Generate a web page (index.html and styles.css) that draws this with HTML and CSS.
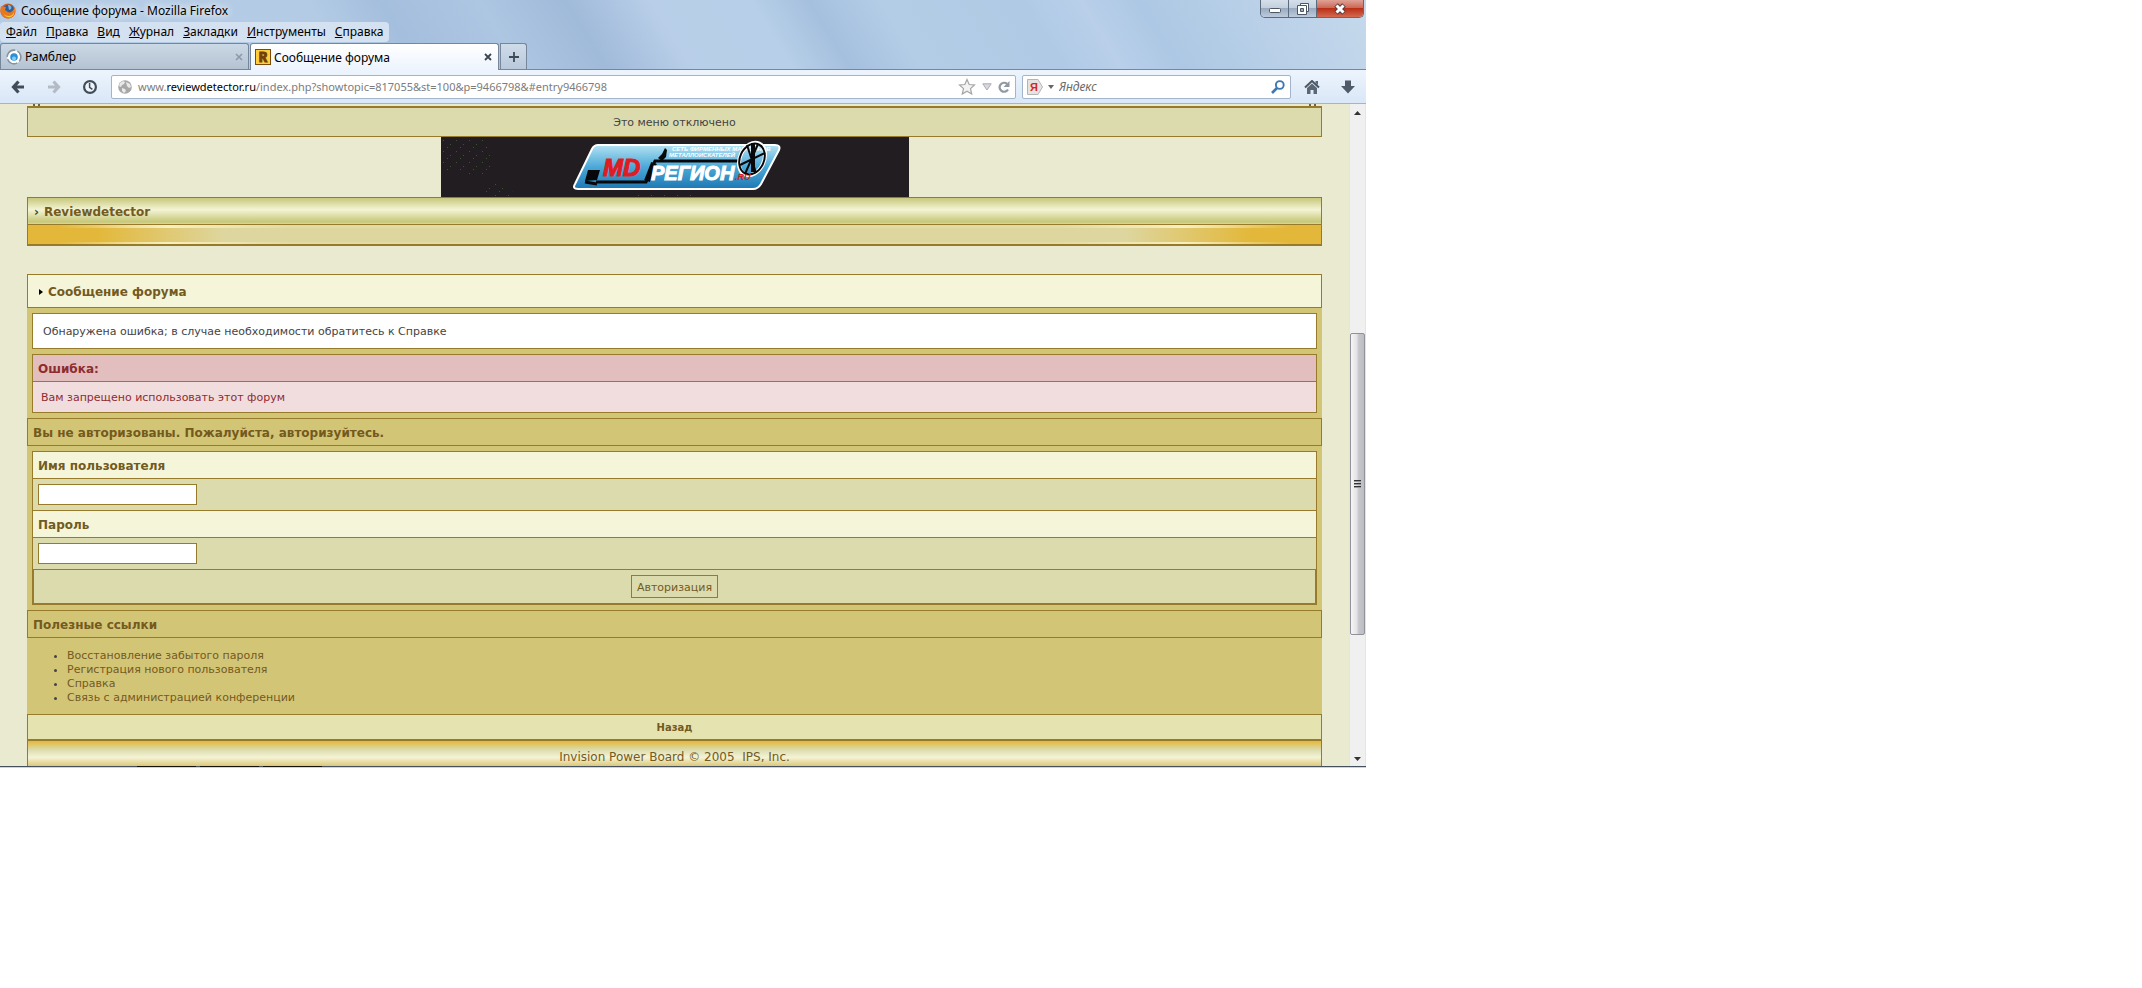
FILE: index.html
```
<!DOCTYPE html>
<html lang="ru">
<head>
    <meta charset="UTF-8">
    <meta name="viewport" content="width=device-width, initial-scale=1.0">
    <title>Сообщение форума</title>
    <link rel="stylesheet" href="styles.css">
</head>
<body>
<div class="window">
    <header class="chrome">
        <div class="titlebar">
            <svg class="logo" viewBox="0 0 16 16">
                <circle cx="8" cy="8" r="7.6" fill="#d9601a"/>
                <circle cx="8.6" cy="6.8" r="5.4" fill="#2c5f9e"/>
                <path d="M8 2c3 0 4 2 3 4L9 7z" fill="#7db4dc"/>
                <path d="M1 3c1 1 3 1 5 1L5 7l3 2c2 1 4 0 6-3l1-2c1 5-1 11-7 11.500C2 15-1 9 1 3z" fill="#e8781f"/>
                <path d="M14 5c1 4-1 8-5 8-3 0-5-1-6-3 2 5 9 6 11 1z" fill="#f8c43c"/>
            </svg>
            <span class="caption">Сообщение форума - Mozilla Firefox</span>
            <div class="winbuttons">
                <button type="button" class="minimize" aria-label="Свернуть">
                    <svg width="14" height="14" viewBox="0 0 14 14"><rect x="1.500" y="6.500" width="11" height="4" rx="1" fill="#fff" stroke="#4d5665"/></svg>
                </button>
                <button type="button" class="maximize" aria-label="Развернуть">
                    <svg width="14" height="14" viewBox="0 0 14 14"><path d="M4.500 1.500h8v8h-8z" fill="#fff" stroke="#4d5665"/><path d="M1.500 3.500h9v9h-9z" fill="#fff" stroke="#4d5665"/><path d="M4.500 6.500h3v3h-3z" fill="#9fb0c4" stroke="#4d5665"/></svg>
                </button>
                <button type="button" class="close" aria-label="Закрыть">
                    <svg width="14" height="14" viewBox="0 0 14 14"><path d="M3 3l8 8m0-8l-8 8" stroke="#5b3a3c" stroke-width="5"/><path d="M3.500 3.500l7 7m0-7l-7 7" stroke="#fff" stroke-width="3"/></svg>
                </button>
            </div>
        </div>
        <nav class="menubar">
            <a href="#"><u>Ф</u>айл</a>
            <a href="#"><u>П</u>равка</a>
            <a href="#"><u>В</u>ид</a>
            <a href="#"><u>Ж</u>урнал</a>
            <a href="#"><u>З</u>акладки</a>
            <a href="#"><u>И</u>нструменты</a>
            <a href="#"><u>С</u>правка</a>
        </nav>
        <div class="tabs">
            <div class="tab">
                <svg class="favicon" viewBox="0 0 16 16">
                    <circle cx="8" cy="8" r="6.800" fill="#fff" stroke="#8b949c" stroke-width="1.600" stroke-dasharray="11.800 2.400" transform="rotate(-60 8 8)"/>
                    <circle cx="8" cy="8" r="3.800" fill="#2c8fd8"/>
                    <circle cx="8" cy="9.500" r="2" fill="#7fd0f7"/>
                </svg>
                <span class="tabname">Рамблер</span>
                <button type="button" class="tabclose" aria-label="Закрыть вкладку"><svg width="8" height="8" viewBox="0 0 8 8"><path d="M1 1l6 6m0-6L1 7" stroke="currentColor" stroke-width="1.600"/></svg></button>
            </div>
            <div class="tab active">
                <svg class="favicon" viewBox="0 0 16 16">
                    <rect x=".5" y=".5" width="15" height="15" fill="#ffcf3d" stroke="#7d4b08"/>
                    <text x="8" y="13" text-anchor="middle" class="rletter">R</text>
                </svg>
                <span class="tabname">Сообщение форума</span>
                <button type="button" class="tabclose" aria-label="Закрыть вкладку"><svg width="8" height="8" viewBox="0 0 8 8"><path d="M1 1l6 6m0-6L1 7" stroke="currentColor" stroke-width="1.800"/></svg></button>
            </div>
            <button type="button" class="newtab" aria-label="Новая вкладка"><svg width="10" height="10" viewBox="0 0 10 10"><path d="M5 0v10M0 5h10" stroke="#3f4a57" stroke-width="1.800"/></svg></button>
        </div>
        <div class="toolbar">
            <div class="navbuttons">
                <button type="button" aria-label="Назад"><svg width="14" height="14" viewBox="0 0 14 14"><path d="M7.500 1.500L2.500 7l5 5.500M3 7h10" fill="none" stroke="#404c58" stroke-width="3.200"/></svg></button>
                <button type="button" aria-label="Вперёд"><svg width="14" height="14" viewBox="0 0 14 14"><path d="M6.500 1.500l5 5.500-5 5.500M11 7H1" fill="none" stroke="#b3bcc6" stroke-width="3.200"/></svg></button>
                <button type="button" aria-label="Журнал"><svg width="14" height="14" viewBox="0 0 14 14"><circle cx="7" cy="7" r="5.900" fill="#eef4fb" stroke="#404c58" stroke-width="2.200"/><path d="M6.600 3v4.400l2.800 2" fill="none" stroke="#404c58" stroke-width="1.500"/></svg></button>
            </div>
            <div class="urlbar">
                <svg class="globe" width="14" height="14" viewBox="0 0 14 14"><circle cx="7" cy="7" r="6.800" fill="#a8a8a8"/><path d="M2 3l3-2 2 1-1 2-2 1-1 2-2-1zM8 2l4 2 1 3-2 1-2-2zM4 8l3 1 1 2-2 2-2-2z" fill="#e9e9e9"/></svg>
                <span class="url">www.<b>reviewdetector.ru</b>/index.php?showtopic=817055&amp;st=100&amp;p=9466798&amp;#entry9466798</span>
                <svg width="18" height="18" viewBox="0 0 18 18"><path d="M9 1.500l2.200 5 5.300.5-4 3.600 1.200 5.400L9 13.200 4.300 16l1.200-5.400-4-3.600 5.300-.5z" fill="#f3f3f3" stroke="#a5a5a5" stroke-width="1.200"/></svg>
                <svg width="10" height="8" viewBox="0 0 10 8"><path d="M.8.800h8.400L5 7z" fill="#d9d9de" stroke="#a9abb5"/></svg>
                <svg width="12" height="12" viewBox="0 0 12 12"><path d="M10 8.500A4.500 4.500 0 1 1 9 2.800" fill="none" stroke="#8f98a3" stroke-width="2.200"/><path d="M11.500 0v6h-6z" fill="#8f98a3"/></svg>
            </div>
            <div class="searchbar">
                <svg width="16" height="16" viewBox="0 0 16 16"><path d="M.5.500H11L15.500 8 11 15.500H.5z" fill="#e4e4e4" stroke="#b5b5b5"/><text x="3" y="12" class="ya">Я</text></svg>
                <svg width="6" height="4" viewBox="0 0 6 4"><path d="M0 0h6L3 4z" fill="#666"/></svg>
                <input type="search" placeholder="Яндекс" aria-label="Поиск">
                <svg width="14" height="14" viewBox="0 0 14 14"><circle cx="8.800" cy="5" r="3.900" fill="none" stroke="#3c78b4" stroke-width="1.900"/><path d="M6 8l-5 5" stroke="#3c78b4" stroke-width="2.600"/></svg>
            </div>
            <div class="toolicons">
                <button type="button" aria-label="Домой"><svg width="16" height="14" viewBox="0 0 16 14"><path d="M1 7.500L8 1l7 6.500" fill="none" stroke="#4a5663" stroke-width="2"/><path d="M11.500 1H14v4l-2.500-2zM3 8l5-4.500L13 8v6H9.500v-4h-3v4H3z" fill="#5b6774"/></svg></button>
                <button type="button" aria-label="Загрузки"><svg width="16" height="14" viewBox="0 0 16 14"><path d="M5 .5h6V6h4l-7 7.500L1 6h4z" fill="#4f5b68"/></svg></button>
            </div>
        </div>
    </header>

    <div class="viewport">
        <main class="page">
            <div class="cutline"><span></span><span></span></div>
            <div class="usermenu">Это меню отключено</div>
            <div class="banner">
                <svg viewBox="0 0 468 60">
                    <defs>
                        <linearGradient id="plate" x1="0" y1="0" x2="0" y2="1"><stop offset="0" stop-color="#b4e2f3"/><stop offset=".5" stop-color="#4ba9d8"/><stop offset="1" stop-color="#1e78b4"/></linearGradient>
                        <pattern id="specks" width="13" height="11" patternUnits="userSpaceOnUse"><path d="M2 3h1v1H2zM9 7h1v1H9zM6 10h1v1h-1z" fill="#3c5233"/></pattern>
                    </defs>
                    <rect width="468" height="60" fill="#221d20"/>
                    <path d="M0 0h42l14 30-20 10-36-8zM40 50l22-6 14 16H44zM190 56h60v4h-60z" fill="url(#specks)"/>
                    <path d="M157 8h177q6 0 4 5l-18 34q-3 5-8 5H137q-6 0-3-5l17-35q2-4 6-4z" fill="url(#plate)" stroke="#fff" stroke-width="2"/>
                    <path d="M147 33h12l-3 10-12 1z" fill="#08080a"/>
                    <path d="M144 45l12 2M155 45h50l9-21h84" fill="none" stroke="#08080a" stroke-width="3"/>
                    <path d="M206 44l7-18" stroke="#08080a" stroke-width="6"/>
                    <path d="M217 21l4-4 3-6 2 2-1 7-4 4z" fill="#08080a"/>
                    <ellipse cx="311" cy="22" rx="12" ry="17" transform="rotate(25 311 22)" fill="none" stroke="#fff" stroke-width="4"/>
                    <text x="231" y="14" class="slogan">СЕТЬ ФИРМЕННЫХ МАГАЗИНОВ</text>
                    <text x="228" y="20" class="slogan">МЕТАЛЛОИСКАТЕЛЕЙ</text>
                    <g fill="none" stroke="#08080a" stroke-width="2"><ellipse cx="311" cy="22" rx="12" ry="16" transform="rotate(25 311 22)"/><path d="M306 8l9 28M299 28l25-12M317 7l-13 30"/><path d="M312 6v29" stroke-width="4"/></g>
                    <text x="162" y="39" class="md">MD</text>
                    <text x="210" y="43" class="region">РЕГИОН</text>
                    <text x="294" y="43" class="ru">.RU</text>
                </svg>
            </div>
            <div class="navstrip">
                <div class="crumbs"><span class="chevron">›</span><a href="#">Reviewdetector</a></div>
                <div class="goldbar"></div>
            </div>

            <section class="board">
                <h1 class="maintitle"><svg width="4" height="6" viewBox="0 0 4 6"><path d="M0 0l4 3-4 3z" fill="#000"/></svg>Сообщение форума</h1>
                <div class="inner">
                    <p class="notice">Обнаружена ошибка; в случае необходимости обратитесь к Справке</p>
                    <div class="errorbox">
                        <h2>Ошибка:</h2>
                        <p>Вам запрещено использовать этот форум</p>
                    </div>
                </div>
                <h2 class="bar">Вы не авторизованы. Пожалуйста, авторизуйтесь.</h2>
                <div class="inner">
                    <form class="login">
                        <label for="username">Имя пользователя</label>
                        <div class="field"><input type="text" id="username"></div>
                        <label for="password">Пароль</label>
                        <div class="field"><input type="password" id="password"></div>
                        <div class="submit"><button type="button">Авторизация</button></div>
                    </form>
                </div>
                <h2 class="bar">Полезные ссылки</h2>
                <ul class="links">
                    <li><a href="#">Восстановление забытого пароля</a></li>
                    <li><a href="#">Регистрация нового пользователя</a></li>
                    <li><a href="#">Справка</a></li>
                    <li><a href="#">Связь с администрацией конференции</a></li>
                </ul>
                <div class="back"><a href="#">Назад</a></div>
                <footer class="copyright">Invision Power Board © 2005 &nbsp;IPS, Inc.</footer>
            </section>
        </main>
        <div class="scrollbar">
            <svg class="arrow" width="7" height="4" viewBox="0 0 7 4"><path d="M0 4l3.500-4L7 4z" fill="#333"/></svg>
            <div class="track"><div class="thumb"><span></span><span></span><span></span></div></div>
            <svg class="arrow" width="7" height="4" viewBox="0 0 7 4"><path d="M0 0l3.500 4L7 0z" fill="#333"/></svg>
        </div>
    </div>
    <div class="windowedge"><span></span><span></span><span></span></div>
</div>
</body>
</html>
```
FILE: styles.css
```
* {
    box-sizing: border-box;
}
body {
    margin: 0;
    background: #fff;
    font-family: "DejaVu Sans", Verdana, sans-serif;
    font-size: 11px;
    color: #444;
}
button {
    padding: 0;
    border: 0;
    background: none;
    font-family: inherit;
}
a {
    color: inherit;
    text-decoration: none;
}
svg {
    display: block;
    flex: none;
}
h1, h2, p, ul {
    margin: 0;
}
.window {
    max-width: 1366px;
}

/* browser frame */
.chrome {
    font-family: "Noto Sans", "Open Sans", sans-serif;
    font-size: 12px;
    color: #000;
    background: linear-gradient(58deg, #b5cce6 0%, #b3cbe5 26%, #a4bedd 31%, #adc6e2 38%, #a0bad9 44%, #b9cfe9 50%, #b7cfe8 57%, #a5c0de 61%, #b3cde7 66%, #b0cae5 76%, #b9cfea 80%, #adc8e4 84%, #c6d9ec 100%);
}
.titlebar {
    display: flex;
    height: 22px;
}
.logo {
    width: 16px;
    height: 16px;
    margin: 3px 5px 0 0;
}
.caption {
    line-height: 22px;
    text-shadow: 0 0 8px #fff, 0 0 8px #fff;
}
.winbuttons {
    display: flex;
    height: 18px;
    margin: 0 2px 0 auto;
    border: 1px solid #5b6a7d;
    border-top: 0;
    border-radius: 0 0 5px 5px;
    overflow: hidden;
}
.winbuttons button {
    display: flex;
    justify-content: center;
    align-items: center;
    width: 28px;
    border-right: 1px solid #5b6a7d;
    background: linear-gradient(#d5dfeb, #c3cfdd 45%, #9aabbf 50%, #bccbdc);
}
.winbuttons .close {
    width: 46px;
    border: 0;
    background: linear-gradient(#dfa297, #cd6956 45%, #b92f18 50%, #d5694f);
}
.menubar {
    display: flex;
    gap: 9px;
    width: fit-content;
    height: 20px;
    padding: 0 6px;
    border-radius: 4px;
    background: #d3e1f1;
    line-height: 20px;
}
.tabs {
    display: flex;
    gap: 1px;
    height: 27px;
    margin-top: 1px;
    border-bottom: 1px solid #76869b;
}
.tab {
    display: flex;
    align-items: center;
    width: 249px;
    height: 26px;
    padding: 0 5px;
    border: 1px solid #76869b;
    border-bottom: 0;
    border-radius: 3px 3px 0 0;
    background: linear-gradient(#cbd8e5, #b4c3d3);
}
.tab.active {
    height: 27px;
    padding: 0 6px 0 4px;
    background: linear-gradient(#fff, #edf4fd);
}
.favicon {
    width: 16px;
    height: 16px;
    margin-right: 3px;
}
.rletter {
    font: bold 14px "Liberation Mono", monospace;
    fill: #75400a;
    stroke: #75400a;
}
.tabname {
    flex: 1;
}
.tabclose {
    color: #8d99a7;
}
.active .tabclose {
    color: #3c4550;
}
.newtab {
    display: flex;
    justify-content: center;
    align-items: center;
    width: 27px;
    border: 1px solid #76869b;
    border-bottom: 0;
    border-radius: 0 3px 0 0;
    background: linear-gradient(#cfdbe9, #b9c9db);
}
.toolbar {
    display: flex;
    align-items: center;
    height: 34px;
    border-bottom: 1px solid #a3b5ca;
    background: linear-gradient(#edf4fd, #d9e7f7);
}
.navbuttons {
    display: flex;
    gap: 22px;
    padding: 0 14px 0 11px;
}
.urlbar, .searchbar {
    display: flex;
    align-items: center;
    height: 24px;
    border: 1px solid #a3b5ca;
    border-radius: 2px;
    background: #fff;
}
.urlbar {
    flex: 1;
    gap: 6px;
    padding: 0 5px 0 6px;
}
.url {
    flex: 1;
    color: #7c7c7c;
    font-size: 11px;
}
.url b {
    font-weight: normal;
    color: #000;
}
.searchbar {
    gap: 5px;
    width: 269px;
    margin-left: 6px;
    padding: 0 5px 0 4px;
}
.searchbar input {
    flex: 1;
    min-width: 0;
    padding: 0;
    border: 0;
    outline: 0;
    background: none;
    font: italic 12px "Noto Sans", sans-serif;
}
.searchbar input::placeholder {
    color: #6b6b6b;
}
.ya {
    font: bold 11px "Liberation Sans", sans-serif;
    fill: #d8261c;
}
.toolicons {
    display: flex;
    gap: 20px;
    padding: 0 10px 0 13px;
}

/* forum page */
.viewport {
    display: flex;
    background: #e9ead0;
}
.page {
    flex: 1;
    padding: 0 27px;
}
.cutline {
    display: flex;
    justify-content: space-between;
    height: 2px;
    padding: 0 6px;
}
.cutline span {
    width: 7px;
    border: solid #6d6444;
    border-width: 0 2px;
}
.usermenu {
    height: 31px;
    border: 1px solid #977a2a;
    border-top-width: 2px;
    background: #dcdbae;
    line-height: 29px;
    text-align: center;
}
.banner svg {
    width: 468px;
    height: 60px;
    margin: 0 auto;
}
.md, .region, .ru, .slogan {
    font-family: "Liberation Sans", sans-serif;
    font-weight: bold;
    font-style: italic;
}
.md {
    font-size: 24px;
    fill: #e01b22;
    stroke: #e01b22;
}
.region {
    font-size: 20px;
    fill: #fff;
    stroke: #fff;
}
.ru {
    font-size: 9px;
    fill: #d41c22;
}
.slogan {
    font-size: 6px;
    fill: #fff;
}
.navstrip {
    border: 1px solid #977a2a;
    border-bottom-width: 2px;
}
.crumbs {
    display: flex;
    gap: 5px;
    height: 26px;
    padding-left: 6px;
    background: linear-gradient(#c8c87c, #f4f4d6 45%, #c6c777 92%, #d8d89c);
    color: #735a1e;
    font-size: 12px;
    font-weight: bold;
    line-height: 28px;
}
.chevron {
    color: #444;
}
.goldbar {
    height: 20px;
    border-top: 1px solid #977a2a;
    --shine: linear-gradient(90deg, #f8efc000 30px, #f8efc0 140px, #f8efc033 260px, #f8efc033 calc(100% - 260px), #f8efc0 calc(100% - 140px), #f8efc000 calc(100% - 30px));
    background:
        var(--shine) top / 100% 3px no-repeat,
        var(--shine) bottom / 100% 2px no-repeat,
        linear-gradient(90deg, #e3b83a 70px, #ddd69e 195px, #ddd69e calc(100% - 195px), #e3b83a calc(100% - 70px));
}
.board {
    margin-top: 28px;
    background: #d3c576;
}
.maintitle {
    display: flex;
    align-items: center;
    gap: 5px;
    height: 34px;
    padding: 1px 0 0 11px;
    border: 1px solid #977a2a;
    background: #f5f6d9;
    color: #735a1e;
    font-size: 12px;
}
.inner {
    padding: 5px;
}
.notice {
    height: 36px;
    padding-left: 10px;
    border: 1px solid #977a2a;
    background: #fff;
    line-height: 35px;
}
.errorbox {
    margin-top: 5px;
    border: 1px solid #977a2a;
    background: #f1dddd;
    color: #8e2c31;
}
.errorbox h2 {
    height: 27px;
    padding-left: 5px;
    border-bottom: 1px solid #977a2a;
    background: #e2bfbe;
    font-size: 12px;
    line-height: 28px;
}
.errorbox p {
    height: 30px;
    padding-left: 8px;
    line-height: 31px;
}
.bar {
    height: 28px;
    padding-left: 5px;
    border: 1px solid #977a2a;
    color: #735a1e;
    font-size: 12px;
    line-height: 28px;
}
.login {
    border: 1px solid #977a2a;
    background: #dcdbae;
}
.login label {
    display: block;
    height: 27px;
    padding-left: 5px;
    border-bottom: 1px solid #977a2a;
    background: #f5f6d9;
    color: #735a1e;
    font-size: 12px;
    font-weight: bold;
    line-height: 28px;
}
.field {
    height: 32px;
    padding: 5px;
    border-bottom: 1px solid #977a2a;
}
.field input {
    display: block;
    width: 159px;
    height: 21px;
    border: 1px solid #977a2a;
    background: #fff;
}
.submit {
    display: flex;
    justify-content: center;
    padding: 5px;
    border: 1px solid #977a2a;
    border-top: 0;
}
.submit button {
    height: 23px;
    padding: 1px 5px 0;
    border: 1px solid #977a2a;
    color: #735a1e;
    font-size: 11px;
}
.links {
    padding: 11px 0 9px 40px;
    line-height: 14px;
}
.links a {
    color: #735a1e;
}
.back {
    height: 27px;
    border: 1px solid #977a2a;
    border-bottom-width: 2px;
    background: #e5e3b0;
    color: #735a1e;
    font-size: 10px;
    font-weight: bold;
    line-height: 26px;
    text-align: center;
}
.copyright {
    height: 25px;
    border: solid #977a2a;
    border-width: 0 1px;
    background: linear-gradient(#e3b83a, #dcdbae 35%, #f4f4d6 65%, #dcc878);
    color: #735a1e;
    font-size: 12px;
    line-height: 33px;
    text-align: center;
    overflow: hidden;
}
.scrollbar {
    display: flex;
    flex-direction: column;
    align-items: center;
    width: 17px;
    border: solid #e4e4e4;
    border-width: 0 1px;
    background: #f0f0f0;
}
.arrow {
    margin: 7px 0 5px;
}
.track {
    display: flex;
    flex: 1;
    width: 15px;
}
.thumb {
    display: flex;
    flex-direction: column;
    justify-content: center;
    align-items: center;
    gap: 1px;
    width: 15px;
    height: 302px;
    margin-top: 213px;
    border: 1px solid #8f9299;
    border-radius: 2px;
    background: linear-gradient(90deg, #f6f6f6, #e3e3e5 45%, #c5c5ca 60%, #bdbdc3);
}
.thumb span {
    width: 7px;
    height: 2px;
    border-top: 1px solid #333;
    background: #999;
}

/* top edges of the taskbar buttons under the window */
.windowedge {
    display: flex;
    gap: 4px;
    height: 2px;
    padding-left: 137px;
    background: linear-gradient(#45505e 1px, #c3d6ea 1px);
}
.windowedge span {
    width: 59px;
    height: 1px;
    background: #14100c;
}
```
